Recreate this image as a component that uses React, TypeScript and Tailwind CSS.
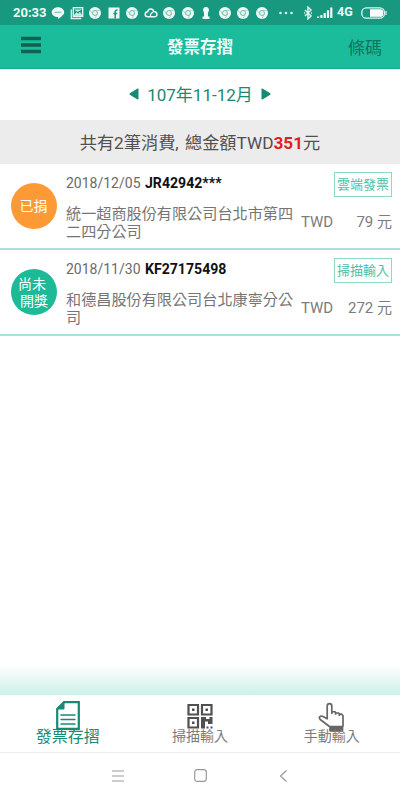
import React from 'react';

type Invoice = {
  status: string[];
  color: string;
  date: string;
  number: string;
  shop: string[];
  amount: string;
  source: string;
};

const invoices: Invoice[] = [
  {
    status: ['已捐'],
    color: 'bg-[#fd9a35]',
    date: '2018/12/05',
    number: 'JR42942***',
    shop: ['統一超商股份有限公司台北市第四', '二四分公司'],
    amount: '79',
    source: '雲端發票',
  },
  {
    status: ['尚未', '開獎'],
    color: 'bg-[#1dba98]',
    date: '2018/11/30',
    number: 'KF27175498',
    shop: ['和德昌股份有限公司台北康寧分公', '司'],
    amount: '272',
    source: '掃描輸入',
  },
];

const notifications = [
  'line', 'photo', 'chrome', 'facebook', 'chrome', 'cloud',
  'chrome', 'chrome', 'keyhole', 'chrome', 'chrome', 'chrome',
];

function NotificationIcon({ name }: { name: string }) {
  return (
    <svg viewBox="0 0 14 14" className="w-[14px] h-[14px] shrink-0" fill="none">
      {name === 'line' && (
        <>
          <path d="M7 1.200c3.500 0 6.200 2.200 6.200 5 0 2.600-3.200 4.800-6.200 6.800v-2C3.500 11 .8 9 .8 6.200s2.700-5 6.200-5z" fill="#eefaf7" />
          <path d="M3.500 6.300h7" stroke="#8accbd" strokeWidth="1.400" />
        </>
      )}
      {name === 'photo' && (
        <>
          <path d="M1.300 3.500v9h10" stroke="#dcf3ee" strokeWidth="1.300" />
          <rect x="3.300" y="1.700" width="9.400" height="8.600" stroke="#eefaf7" strokeWidth="1.300" />
          <path d="M4 9.500l2.500-3 1.700 1.800 1.600-2 2.400 3.200zM4.500 3.500l3 2 4-2" fill="#cfeee6" stroke="#cfeee6" strokeWidth=".7" />
        </>
      )}
      {name === 'chrome' && (
        <>
          <circle cx="7" cy="7" r="6" fill="#eefaf7" />
          <path d="M7 4.300h5M4.700 8.300L2.300 4.300M9.300 8.300L7 12.500" stroke="#9bd3c6" strokeWidth=".8" />
          <circle cx="7" cy="7" r="2.500" fill="#e4f6f1" stroke="#62b8a6" strokeWidth=".9" />
        </>
      )}
      {name === 'facebook' && (
        <>
          <rect x="1.500" y="1.500" width="11" height="11" fill="#eefaf7" />
          <path d="M8.200 12.500V5.800c0-1.300.6-1.900 2.400-1.900M6.300 7.600h4" stroke="#16997f" strokeWidth="1.500" />
        </>
      )}
      {name === 'cloud' && (
        <>
          <path d="M3.700 10.800a2.500 2.500 0 010-5C4.200 2.200 9 2 9.700 5.600c4 .1 4.300 5.200.8 5.200z" stroke="#eefaf7" strokeWidth="1.500" />
          <path d="M6.300 10.300c0-2.300 1-3.600 3-4.300" stroke="#eefaf7" strokeWidth="1.200" />
        </>
      )}
      {name === 'keyhole' && (
        <path d="M7 1a2.900 2.900 0 012.500 4.500L9 7v3.500h1.500V13h-7v-2.500H5V7l-.5-1.500A2.900 2.900 0 017 1z" fill="#eefaf7" />
      )}
    </svg>
  );
}

function StatusBar() {
  return (
    <div className="h-[25px] bg-[#18997f] flex items-center pl-[13px] text-[#eefaf7]">
      <span className="w-[38px] shrink-0 text-[13px] font-bold leading-none">20:33</span>
      <div className="flex gap-[4.560px]">
        {notifications.map((name, i) => (
          <NotificationIcon key={i} name={name} />
        ))}
      </div>
      <svg viewBox="0 0 16 4" className="w-[16px] h-[4px] ml-[9px] shrink-0" fill="#dff5f0">
        <circle cx="2.500" cy="2" r="1.300" />
        <circle cx="8" cy="2" r="1.300" />
        <circle cx="13.500" cy="2" r="1.300" />
      </svg>
      <svg viewBox="0 0 10 14" className="w-[10px] h-[14px] ml-[9px] shrink-0" fill="none" stroke="#dff5f0" strokeWidth="1.500">
        <path d="M2 4l6 6-3 2.800V1.200L8 4l-6 6M1 7h1M8 7h1" />
      </svg>
      <svg viewBox="0 0 16 12" className="w-[16px] h-[12px] ml-[4px] shrink-0" fill="#eefaf7">
        <path d="M0 9.500h2.200V11H0zM3.300 8h2.200v3H3.300zM6.600 6h2.200v5H6.600zM9.900 3.300h2.200V11H9.900zM13.200.5h2.200V11h-2.200z" />
      </svg>
      <span className="w-[24px] ml-[4px] shrink-0 text-[12.500px] font-bold leading-none">4G</span>
      <svg viewBox="0 0 26 12" className="w-[26px] h-[12px] shrink-0" fill="none">
        <rect x=".8" y=".8" width="22.600" height="10.400" rx="4.500" stroke="#dff5f0" strokeWidth="1.300" />
        <path d="M9 2.200h10.500a2.600 2.600 0 012.600 2.600v2.400a2.600 2.600 0 01-2.600 2.600H9z" fill="#fff" />
        <path d="M25 4v4" stroke="#dff5f0" strokeWidth="1.200" />
      </svg>
    </div>
  );
}

function Header() {
  return (
    <header className="h-[44px] bg-[#1bbc9c] border-b border-[#17a98c] grid grid-cols-3 items-center">
      <svg viewBox="0 0 22 18" className="w-[22px] h-[18px] ml-[20px] -mt-[3px]" stroke="#0b6350" strokeWidth="3.400">
        <path d="M1 2.500h20M1 9h20M1 15.500h20" />
      </svg>
      <h1 className="pt-[4px] text-center text-[16.500px] leading-none font-bold text-[#effbf8]">發票存摺</h1>
      <span className="pt-[4px] text-right pr-[18px] text-[17px] leading-none text-[#0e7561]">條碼</span>
    </header>
  );
}

function InvoiceRow({ invoice }: { invoice: Invoice }) {
  return (
    <li className="h-[86px] border-b-2 border-[#a9e3d6] flex">
      <div className="w-[66px] pt-[19px] pl-[10.500px] shrink-0">
        <div className={`w-[46px] h-[46px] rounded-full flex flex-col items-center justify-center text-white text-[14px] leading-[17px] ${invoice.color}`}>
          {invoice.status.map((line, i) => (
            <span key={line} className={invoice.status.length === 1 ? '' : i === 0 ? 'pt-px pr-[3px]' : 'pl-px'}>
              {line}
            </span>
          ))}
        </div>
      </div>
      <div className="w-[230px] shrink-0 whitespace-nowrap">
        <div className="mt-[10px] h-[18px] flex gap-[5px] leading-[18px]">
          <span className="w-[74px] text-[14px] text-[#6a6a6a]">{invoice.date}</span>
          <b className="text-[14.100px] font-bold text-[#111]">{invoice.number}</b>
        </div>
        <div className="mt-[14px] text-[15.150px] leading-[17.500px] text-[#757575]">
          {invoice.shop.map((line) => (
            <div key={line}>{line}</div>
          ))}
        </div>
      </div>
      <div className="flex-1 pr-[8px] pt-[8px] flex flex-col items-end">
        <span className="w-[58px] h-[25px] border border-[#8ed8c7] text-[13px] leading-[24px] text-center text-[#4bc0a5]">
          {invoice.source}
        </span>
        <div className="mt-[15px] w-[91px] flex justify-between text-[15px] leading-[20px] text-[#7c7c7c]">
          <span>TWD</span>
          <span>{invoice.amount} 元</span>
        </div>
      </div>
    </li>
  );
}

function TabBar() {
  return (
    <nav className="h-[58px] border-b border-[#eee] grid grid-cols-3 text-center">
      <div className="flex flex-col items-center pt-[6px] pl-[2px] text-[#168a72]">
        <svg viewBox="0 0 24 29" className="w-[24px] h-[29px]" fill="none" stroke="currentColor">
          <path d="M8 1.200h14.800v26.600H1.200V8z" strokeWidth="2.200" />
          <path d="M8 1v7H1z" fill="currentColor" />
          <path d="M4.500 14h15M4.500 18.500h15M4.500 23h15" strokeWidth="1.700" />
        </svg>
        <span className="-mt-[2px] text-[16px] leading-[18px]">發票存摺</span>
      </div>
      <div className="flex flex-col items-center pt-[8px] text-[#7c7c7c]">
        <svg viewBox="0 0 27 27" className="w-[27px] h-[27px] ml-[2px]" fill="none" stroke="#505050">
          <path d="M1.500 2h9.500v9.500H1.500zM15 2h9.500v9.500H15zM1.500 15h9.500v9.500H1.500z" strokeWidth="2.200" />
          <path d="M5 5.500h2.500v2.500H5zM18.500 5.500H21v2.500h-2.500zM5 18.500h2.500V21H5zM14 14h5v2h3.500v-2h3v7H21v-2.500h-3V25.500H14zM19.500 23.500h2v2h-2zM23.500 23.500h2v2h-2z" fill="#505050" stroke="none" />
        </svg>
        <span className="-mt-[2px] text-[14px] leading-[16px]">掃描輸入</span>
      </div>
      <div className="flex flex-col items-center pt-[7px] pr-[3px] text-[#7c7c7c]">
        <svg viewBox="0 0 27 30" className="w-[27px] h-[30px]" fill="none" stroke="#666" strokeWidth="1.700" strokeLinejoin="round">
          <path d="M11.500 24.500L2.200 17.500c-2-2.200.3-4.400 2.800-3l4.200 2.300V4c0-3.200 4.600-3.200 4.600 0v5.500l3.200.3 1 1 2.700.2 1 1.200h2l1.300 1.500v11M13.800 9.500V12M17.600 10.500v2.300M21.300 12v2" />
          <path d="M12 24.500h12.500v4.300H12z" fill="#666" />
        </svg>
        <span className="-mt-[4px] text-[14px] leading-[16px]">手動輸入</span>
      </div>
    </nav>
  );
}

export default function App() {
  return (
    <div className="w-[400px] h-[800px] bg-white flex flex-col overflow-hidden font-[Roboto,'Noto_Sans_CJK_TC',sans-serif]">
      <StatusBar />
      <Header />
      <div className="h-[51px] border-t border-[#d9faf6] flex items-center justify-center gap-[8px] text-[#168a72]">
        <svg viewBox="0 0 10 12" className="w-[10px] h-[12px] -mt-[2px]" fill="currentColor">
          <path d="M9.500 1.200v9.600q0 1-1 .6L.8 6.700Q0 6 .8 5.300L8.500.6q1-.4 1 .6z" />
        </svg>
        <span className="text-[17px] leading-none">107年11-12月</span>
        <svg viewBox="0 0 10 12" className="w-[10px] h-[12px] -mt-[2px]" fill="currentColor">
          <path d="M.5 1.200v9.600q0 1 1 .6l7.700-4.700q.8-.7 0-1.400L1.500.6q-1-.4-1 .6z" />
        </svg>
      </div>
      <div className="h-[44px] bg-[#ececec] text-center text-[17.200px] leading-[47px] text-[#505050]">
        共有2筆消費<span className="mr-[2px]">, </span>總金額TWD<b className="text-[#e51c1c]">351</b>元
      </div>
      <ul>
        {invoices.map((invoice) => (
          <InvoiceRow key={invoice.number} invoice={invoice} />
        ))}
      </ul>
      <div className="flex-1" />
      <div className="h-[30px] bg-linear-to-b from-white to-[#cdf0e8]" />
      <TabBar />
      <div className="h-[47px] pb-[2px] flex items-center justify-center gap-[70px] text-[#999]">
        <svg viewBox="0 0 12 12" className="w-[12px] h-[12px]" stroke="currentColor" strokeWidth="1.200">
          <path d="M0 1h12M0 6h12M0 11h12" />
        </svg>
        <svg viewBox="0 0 13 13" className="w-[13px] h-[13px]" fill="none" stroke="currentColor" strokeWidth="1.200">
          <rect x=".7" y=".7" width="11.600" height="11.600" rx="2.500" />
        </svg>
        <svg viewBox="0 0 12 12" className="w-[12px] h-[12px]" fill="none" stroke="currentColor" strokeWidth="1.200">
          <path d="M9.500 .5L3.500 6l6 5.500" />
        </svg>
      </div>
    </div>
  );
}
